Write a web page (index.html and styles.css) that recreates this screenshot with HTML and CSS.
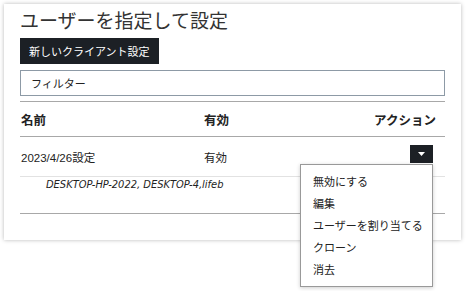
FILE: index.html
```html
<!DOCTYPE html>
<html lang="ja">
<head>
  <meta charset="UTF-8" />
  <title>ユーザーを指定して設定</title>
  <link rel="stylesheet" href="styles.css">
</head>
<body>
  <div class="settings-card">
    <h2>ユーザーを指定して設定</h2>
    <button class="new-btn">新しいクライアント設定</button>
    <input type="text" class="filter" placeholder="フィルター" />

    <table class="client-table">
      <thead>
        <tr>
          <th class="col-name">名前</th>
          <th class="col-active">有効</th>
          <th class="col-action">アクション</th>
        </tr>
      </thead>
      <tbody>
        <tr class="main-row">
          <td>2023/4/26設定</td>
          <td>有効</td>
          <td class="col-action">
            <div class="action-wrap">
              <button class="caret-btn" aria-label="menu">
                <svg width="7" height="4" viewBox="0 0 7 4"><path d="M0 0h7L3.5 4z" fill="#fff"/></svg>
              </button>
              <ul class="action-menu">
                <li>無効にする</li>
                <li>編集</li>
                <li>ユーザーを割り当てる</li>
                <li>クローン</li>
                <li>消去</li>
              </ul>
            </div>
          </td>
        </tr>
        <tr class="detail-row">
          <td colspan="3">DESKTOP-HP-2022, DESKTOP-4,lifeb</td>
        </tr>
      </tbody>
    </table>
  </div>
</body>
</html>
```

FILE: styles.css
```css
:root {
  --dark: #1c2025;
  --text: #222;
  --line: #a8a8a8;
  --input-border: #8d9aa6;
}
body {
  margin: 0;
  min-height: 291px;
  background: #fff;
  color: var(--text);
  font-family: "Liberation Sans", "Noto Sans CJK JP", sans-serif;
}
.settings-card {
  margin: 4px 0 0 4px;
  width: 425px;
  height: 232px;
  padding: 4px 16px 0;
  background: #fff;
  box-shadow: 0 0 4px rgba(0, 0, 0, 0.28);
}
.settings-card h2 {
  margin: 0;
  font-size: 19px;
  font-weight: 400;
  line-height: 24px;
  color: #333;
  font-family: "Noto Sans CJK JP", sans-serif;
}
.new-btn {
  display: block;
  margin-top: 6px;
  height: 26px;
  padding: 0 9px;
  border: none;
  background: var(--dark);
  color: #fff;
  font-family: "Noto Sans CJK JP", sans-serif;
  font-size: 11px;
}
.filter {
  display: block;
  box-sizing: border-box;
  width: 100%;
  height: 26px;
  margin-top: 6px;
  padding: 0 10px;
  border: 1px solid var(--input-border);
  font-family: "Noto Sans CJK JP", sans-serif;
  font-size: 11px;
}
.filter::placeholder {
  color: #222;
}
.client-table {
  width: 100%;
  margin-top: 5px;
  border-collapse: collapse;
  border-top: 1px solid var(--line);
  font-size: 11.5px;
}
.client-table th {
  height: 34px;
  padding: 0 1px;
  text-align: left;
  font-size: 12.5px;
  font-weight: bold;
  border-bottom: 1px solid var(--line);
}
.client-table .col-name {
  width: 181px;
}
.client-table th.col-action {
  text-align: right;
  padding-right: 9px;
}
.main-row td {
  height: 39px;
  padding: 0 1px;
  border-bottom: 1px solid #e2e2e2;
}
.main-row td.col-action {
  height: 31px;
  vertical-align: top;
  text-align: right;
  padding: 8px 12px 0 0;
}
.detail-row td {
  height: 35px;
  padding: 1px 0 0 26px;
  vertical-align: top;
  font-family: "Liberation Sans Narrow", "DejaVu Sans Condensed", sans-serif;
  font-size: 11px;
  font-style: italic;
  border-bottom: 1px solid var(--line);
}
.action-wrap {
  position: relative;
  display: inline-block;
}
.caret-btn {
  display: flex;
  align-items: center;
  justify-content: center;
  width: 23px;
  height: 18px;
  padding: 0;
  border: none;
  background: var(--dark);
}
.action-menu {
  position: absolute;
  z-index: 5;
  top: 19px;
  right: 0;
  width: 131px;
  margin: 0;
  padding: 5px 0 6px;
  list-style: none;
  text-align: left;
  white-space: nowrap;
  background: #fff;
  border: 1px solid #999;
  box-shadow: 0 1px 4px rgba(0, 0, 0, 0.2);
  font-family: "Noto Sans CJK JP", sans-serif;
  font-size: 11px;
}
.action-menu li {
  padding: 0 12px;
  line-height: 22px;
}
```
